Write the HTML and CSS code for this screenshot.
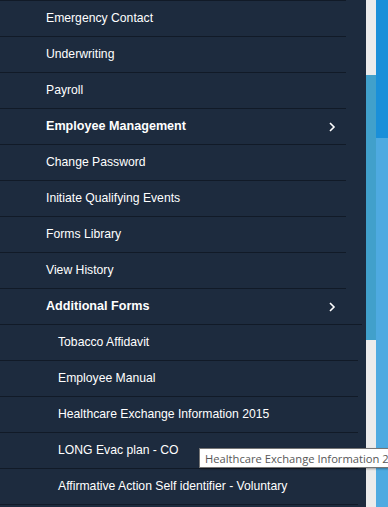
FILE: index.html
```html
<!DOCTYPE html>
<html lang="en">
<head>
  <meta charset="UTF-8">
  <title>Menu</title>
  <link rel="stylesheet" href="styles.css">
</head>
<body>
  <div class="layout">
    <nav class="sidebar">
      <ul class="menu">
        <li class="item"><a href="#">Emergency Contact</a></li>
        <li class="item"><a href="#">Underwriting</a></li>
        <li class="item"><a href="#">Payroll</a></li>
        <li class="item group">
          <a href="#">Employee Management</a>
          <svg class="chevron" width="7" height="10" viewBox="0 0 7 10"><polyline points="1,1 5,5 1,9" fill="none" stroke="#fff" stroke-width="1.6"/></svg>
        </li>
        <li class="item"><a href="#">Change Password</a></li>
        <li class="item"><a href="#">Initiate Qualifying Events</a></li>
        <li class="item"><a href="#">Forms Library</a></li>
        <li class="item"><a href="#">View History</a></li>
        <li class="item group open">
          <a href="#">Additional Forms</a>
          <svg class="chevron" width="7" height="10" viewBox="0 0 7 10"><polyline points="1,1 5,5 1,9" fill="none" stroke="#fff" stroke-width="1.6"/></svg>
        </li>
        <li class="item sub"><a href="#">Tobacco Affidavit</a></li>
        <li class="item sub"><a href="#">Employee Manual</a></li>
        <li class="item sub"><a href="#">Healthcare Exchange Information 2015</a></li>
        <li class="item sub"><a href="#">LONG Evac plan - CO</a></li>
        <li class="item sub"><a href="#">Affirmative Action Self identifier - Voluntary</a></li>
        <li class="item sub"><a href="#">&nbsp;</a></li>
      </ul>
    </nav>
    <div class="scrollbar">
      <div class="track-top"></div>
      <div class="thumb"></div>
      <div class="track-bottom"></div>
    </div>
    <div class="page-edge">
      <div class="edge-top"></div>
      <div class="edge-bottom"></div>
    </div>
  </div>
  <div class="tooltip">Healthcare Exchange Information 2015</div>
</body>
</html>
```

FILE: styles.css
```css
* {
  box-sizing: border-box;
}

body {
  margin: 0;
  padding: 0;
  height: 507px;
  overflow: hidden;
  position: relative;
  font-family: 'Liberation Sans', Arial, sans-serif;
}

.layout {
  display: flex;
  height: 507px;
}

.sidebar {
  width: 366px;
  background: #1d2b3e;
  overflow: hidden;
}

.menu {
  list-style: none;
  margin: 0;
  padding: 0;
}

.item {
  height: 36px;
  display: flex;
  align-items: center;
  padding-left: 46px;
  margin-right: 20px;
  border-top: 1px solid #111a27;
}

.item a {
  color: #fff;
  text-decoration: none;
  font-size: 12.2px;
  padding-bottom: 1px;
}

.group a {
  font-weight: bold;
  font-size: 12.6px;
}

.chevron {
  margin-left: auto;
  margin-right: 10px;
}

.sub {
  padding-left: 58px;
  margin-right: 8px;
}

.open + .sub {
  margin-right: 4px;
}

.scrollbar {
  width: 10px;
  display: flex;
  flex-direction: column;
}

.track-top {
  height: 75px;
  background: #ebebeb;
}

.thumb {
  height: 265px;
  background: #41a0cb;
}

.track-bottom {
  flex: 1;
  background: #ebebeb;
}

.page-edge {
  flex: 1;
  display: flex;
  flex-direction: column;
}

.edge-top {
  height: 138px;
  background: #1a8fd9;
}

.edge-bottom {
  flex: 1;
  background: #4eaae1;
}

.tooltip {
  position: absolute;
  left: 199px;
  top: 448px;
  height: 20px;
  padding: 3px 0 0 5px;
  width: 189px;
  overflow: hidden;
  white-space: nowrap;
  background: #fff;
  border: 1px solid #767676;
  border-right: none;
  box-shadow: 1px 1px 2px rgba(0, 0, 0, 0.35);
  color: #575757;
  font-family: 'Open Sans', sans-serif;
  font-size: 11.2px;
  line-height: 14px;
}
```
